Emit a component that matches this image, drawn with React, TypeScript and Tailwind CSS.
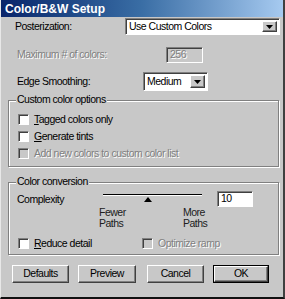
import React from "react";

const raised =
  "border border-t-[#ffffff] border-l-[#ffffff] border-r-[#404040] border-b-[#404040] shadow-[inset_-1px_-1px_0_#808080]";
const sunken =
  "border border-t-[#808080] border-l-[#808080] border-r-[#ffffff] border-b-[#ffffff] shadow-[inset_1px_1px_0_#404040]";
const disabledText = "text-[#808080] [text-shadow:1px_1px_0_#ffffff]";

function Arrow() {
  return (
    <div className={`w-[15px] h-full bg-[#c8c8c8] flex items-center justify-center ${raised}`}>
      <svg width="7" height="4" viewBox="0 0 7 4">
        <path d="M0 0H7L3.5 4Z" fill="#000" />
      </svg>
    </div>
  );
}

function Select({ value, className }: { value: string; className: string }) {
  return (
    <div className={`bg-white flex items-stretch p-[2px] ${sunken} ${className}`}>
      <div className="flex-1 flex items-center pl-[1px] leading-none">{value}</div>
      <Arrow />
    </div>
  );
}

function Check({ disabled }: { disabled?: boolean }) {
  return (
    <div
      className={`w-[11px] h-[11px] shrink-0 ${disabled ? "bg-[#c8c8c8]" : "bg-white"} ${sunken}`}
    />
  );
}

function CheckRow({
  label,
  u,
  disabled,
  className = "",
}: {
  label: string;
  u?: number;
  disabled?: boolean;
  className?: string;
}) {
  return (
    <div className={`flex items-center h-[12px] ${className}`}>
      <Check disabled={disabled} />
      <span className={`ml-[5px] leading-none whitespace-nowrap ${disabled ? disabledText : ""}`}>
        {u !== undefined ? (
          <>
            {label.slice(0, u)}
            <span className="underline">{label[u]}</span>
            {label.slice(u + 1)}
          </>
        ) : (
          label
        )}
      </span>
    </div>
  );
}

function Group({
  title,
  className,
  children,
}: {
  title: string;
  className: string;
  children: React.ReactNode;
}) {
  return (
    <div
      className={`relative ml-[7px] w-[271px] border border-[#808080] shadow-[1px_1px_0_#ffffff,inset_1px_1px_0_#ffffff] ${className}`}
    >
      <span className="absolute left-[7px] top-[-7px] px-[1px] bg-[#c8c8c8] leading-none">
        {title}
      </span>
      {children}
    </div>
  );
}

function Button({ label, def, className = "" }: { label: string; def?: boolean; className?: string }) {
  const inner = (
    <div className={`w-full h-full flex items-center justify-center bg-[#c8c8c8] ${raised}`}>
      {label}
    </div>
  );
  return def ? (
    <div className={`border border-black ${className}`}>{inner}</div>
  ) : (
    <div className={className}>{inner}</div>
  );
}

export default function App() {
  return (
    <div
      className="w-[285px] h-[299px] bg-[#c8c8c8] text-[10.5px] tracking-[-0.5px] text-black flex flex-col border-l border-l-[#e8e8e8] border-r-2 border-r-[#404040] border-b-2 border-b-[#101010] overflow-hidden"
      style={{ fontFamily: '"Liberation Sans", Arial, sans-serif' }}
    >
      <div className="h-[17px] shrink-0 bg-linear-to-r from-[#0a246a] via-[#3a6ea5] to-[#a6caf0] flex items-center pl-[4px] text-white font-bold text-[12px] tracking-normal">
        Color/B&amp;W Setup
      </div>

      {/* Posterization */}
      <div className="flex items-center mt-[1px] h-[17px]">
        <div className="w-[124px] pl-[14px]">Posterization:</div>
        <Select value="Use Custom Colors" className="w-[155px] h-[17px]" />
      </div>

      {/* Max colors */}
      <div className="flex items-center mt-[12px] h-[16px]">
        <div className={`w-[165px] pl-[16px] ${disabledText}`}>Maximum # of colors:</div>
        <div className={`w-[37px] h-[16px] flex items-center pl-[3px] ${sunken}`}>
          <span className={disabledText}>256</span>
        </div>
      </div>

      {/* Edge smoothing */}
      <div className="flex items-center mt-[9px] h-[19px]">
        <div className="w-[142px] pl-[16px]">Edge Smoothing:</div>
        <Select value="Medium" className="w-[65px] h-[19px]" />
      </div>

      <Group title="Custom color options" className="mt-[9px] h-[67px] shrink-0">
        <div className="pl-[9px] pt-[12px] flex flex-col gap-[5px]">
          <CheckRow label="Tagged colors only" u={0} />
          <CheckRow label="Generate tints" u={0} />
          <CheckRow label="Add new colors to custom color list" disabled />
        </div>
      </Group>

      <Group title="Color conversion" className="mt-[15px] h-[73px] shrink-0">
        <div className="flex pl-[8px] pt-[8px]">
          <div className="w-[80px] leading-none pt-[3px]">Complexity</div>
          <div className="w-[112px] flex flex-col">
            <div className="relative h-[12px]">
              <div className="absolute left-[6px] right-[7px] top-[3px] h-[2px] bg-black border-b border-b-white" />
              <svg
                className="absolute left-[47px] top-[6px]"
                width="8"
                height="5"
                viewBox="0 0 8 5"
              >
                <path d="M4 0L8 5H0Z" fill="#000" />
              </svg>
            </div>
            <div className="flex leading-[11px] mt-[4px]">
              <div className="w-[86px] pl-[2px] text-[#202020]">
                Fewer
                <br />
                Paths
              </div>
              <div className="text-[#202020]">
                More
                <br />
                Paths
              </div>
            </div>
          </div>
          <div className={`ml-[8px] w-[36px] h-[16px] bg-white flex items-center pl-[3px] ${sunken}`}>
            10
          </div>
        </div>
        <div className="flex pl-[9px] mt-[8px]">
          <div className="w-[124px]">
            <CheckRow label="Reduce detail" u={0} />
          </div>
          <CheckRow label="Optimize ramp" disabled />
        </div>
      </Group>

      <div className="flex mt-[10px] pl-[11px] h-[18px]">
        <Button label="Defaults" className="w-[57px] h-[18px]" />
        <Button label="Preview" className="w-[58px] h-[18px] ml-[9px]" />
        <Button label="Cancel" className="w-[57px] h-[18px] ml-[11px]" />
        <Button label="OK" def className="w-[56px] h-[18px] ml-[9px]" />
      </div>
    </div>
  );
}
